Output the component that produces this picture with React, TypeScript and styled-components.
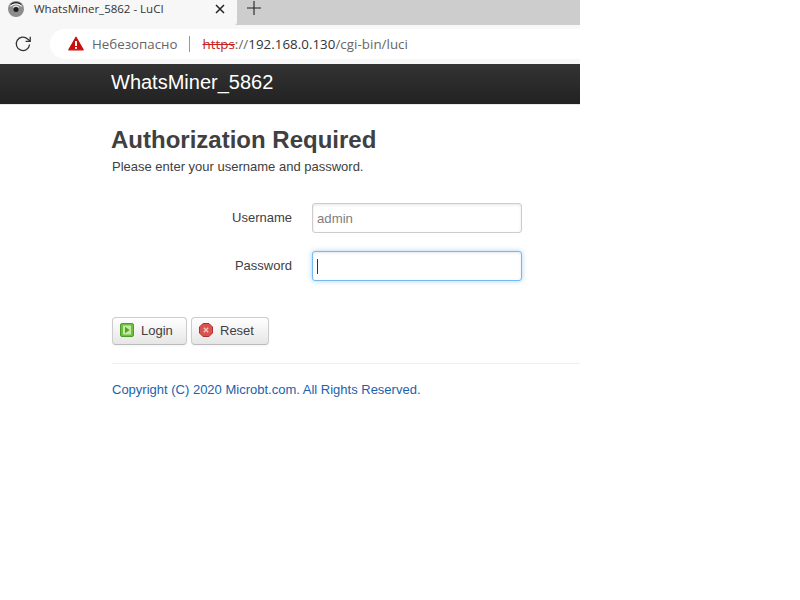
import * as React from "react";
import styled, { createGlobalStyle } from "styled-components";

const GlobalStyle = createGlobalStyle`
  html, body {
    margin: 0;
    padding: 0;
    background: white;
    font-family: "Liberation Sans", Arial, sans-serif;
  }
`;

const Page = styled.div`
  width: 580px;
  height: 600px;
  overflow: hidden;
`;

const TabStrip = styled.div`
  display: flex;
  height: 25px;
  background: #cdcdcd;
`;

const Tab = styled.div`
  width: 237px;
  display: flex;
  align-items: center;
  box-sizing: border-box;
  padding: 0 12px 8px 8px;
  background: #f7f7f7;
  border-bottom-right-radius: 3px;
`;

const TabTitle = styled.span`
  flex: 1;
  margin-left: 10px;
  font-family: "Open Sans", sans-serif;
  font-size: 11.5px;
  color: #333;
  white-space: nowrap;
`;

const NewTab = styled.div`
  display: flex;
  align-items: center;
  margin: 0 0 9px 10px;
`;

const Toolbar = styled.div`
  display: flex;
  align-items: center;
  box-sizing: border-box;
  height: 39px;
  padding: 4px 0 5px 14px;
  background: #f7f7f7;
`;

const Omnibox = styled.div`
  flex: 1;
  height: 30px;
  box-sizing: border-box;
  margin-left: 18px;
  display: flex;
  align-items: center;
  padding: 0 0 1px 18px;
  background: white;
  border-radius: 15px 0 0 15px;
  font-family: "Open Sans", sans-serif;
  font-size: 13.3px;
  white-space: nowrap;
`;

const Warning = styled.span`
  margin-left: 8px;
  color: #666;
`;

const Divider = styled.span`
  width: 1px;
  height: 16px;
  margin: 0 13px 0 11px;
  background: #999;
`;

const Url = styled.span`
  letter-spacing: 0.05px;
`;

const Scheme = styled.span`
  color: #c5221f;
  text-decoration: line-through;
`;

const Host = styled.span`
  color: #333;
`;

const Path = styled.span`
  color: #666;
`;

const Header = styled.div`
  height: 41px;
  box-sizing: border-box;
  padding: 0 0 4px 111px;
  display: flex;
  align-items: center;
  background: linear-gradient(#333333, #222222);
  border-bottom: 1px solid #e8e8e8;
  color: white;
  font-size: 20px;
`;

const Content = styled.div`
  padding: 22px 0 0 112px;
  color: #404040;
`;

const Title = styled.h2`
  margin: 0 0 0 -1px;
  font-size: 24px;
  line-height: 26px;
  font-weight: bold;
  color: #404040;
`;

const Intro = styled.p`
  margin: 5px 0 0;
  font-size: 13px;
  line-height: 18px;
`;

const Form = styled.div`
  display: flex;
  flex-direction: column;
  gap: 18px;
  margin-top: 27px;
`;

const Row = styled.div`
  display: flex;
  align-items: center;
`;

const Label = styled.label`
  width: 180px;
  padding-bottom: 2px;
  text-align: right;
  font-size: 13px;
  color: #404040;
`;

const Field = styled.div<{ $focused?: boolean }>`
  width: 210px;
  height: 30px;
  margin-left: 20px;
  box-sizing: border-box;
  display: flex;
  align-items: center;
  padding-left: 4px;
  background: white;
  border: 1px solid ${(p) => (p.$focused ? "#74b9ef" : "#ccc")};
  border-radius: 3px;
  font-size: 13.2px;
  color: #808080;
  box-shadow: ${(p) =>
    p.$focused
      ? "inset 0 1px 3px rgba(0,0,0,0.1), 0 0 5px rgba(82,168,236,0.5)"
      : "inset 0 1px 3px rgba(0,0,0,0.1)"};
`;

const Caret = styled.span`
  width: 1px;
  height: 15px;
  background: #333;
`;

const Actions = styled.div`
  display: flex;
  gap: 4px;
  margin-top: 36px;
`;

const Button = styled.div<{ $width: number }>`
  width: ${(p) => p.$width}px;
  height: 28px;
  box-sizing: border-box;
  display: flex;
  align-items: center;
  padding: 0 0 2px 7px;
  gap: 7px;
  background: linear-gradient(#ffffff, #e6e6e6);
  border: 1px solid #ccc;
  border-bottom-color: #bbb;
  border-radius: 4px;
  box-shadow: 0 1px 2px rgba(0, 0, 0, 0.05);
  font-size: 13px;
  color: #404040;
`;

const Rule = styled.hr`
  height: 1px;
  margin: 18px 0 0;
  border: 0;
  background: #eee;
`;

const Footer = styled.a`
  display: block;
  margin-top: 18px;
  font-size: 13px;
  line-height: 16px;
  color: #1a62ad;
`;

const Favicon = () => (
  <svg width="16" height="16" viewBox="0 0 16 16">
    <circle cx="8" cy="8" r="8" fill="#8c8c8c" />
    <path d="M3 3.5a7.5 7.5 0 0 1 10 0" fill="none" stroke="#222" strokeWidth="1.2" />
    <path d="M2.4 5.3a8 8 0 0 1 11.2 0" fill="none" stroke="#fff" strokeWidth="1.1" />
    <path d="M5 6.3a4.5 4.5 0 0 1 6 0" fill="none" stroke="#fff" strokeWidth="1" />
    <circle cx="8" cy="8.6" r="2.5" fill="#1c1c1c" />
  </svg>
);

const CloseIcon = () => (
  <svg width="10" height="10" viewBox="0 0 10 10">
    <path d="M1 1l8 8M9 1l-8 8" stroke="#222" strokeWidth="1.5" />
  </svg>
);

const PlusIcon = () => (
  <svg width="14" height="14" viewBox="0 0 14 14">
    <path d="M7 0v14M0 7h14" stroke="#222" strokeWidth="1.1" />
  </svg>
);

const ReloadIcon = () => (
  <svg width="18" height="18" viewBox="0 0 18 18" fill="none">
    <path d="M15.6 9.5A6.7 6.7 0 1 1 13.6 4L16 6" stroke="#333" strokeWidth="1.3" />
    <path d="M16.2 1.8v4.6h-4.6" stroke="#333" strokeWidth="1.3" />
  </svg>
);

const WarningIcon = () => (
  <svg width="16" height="15" viewBox="0 0 16 15">
    <path d="M8 1.2L15.2 13.8H0.8z" fill="#c5100d" stroke="#c5100d" strokeWidth="1.2" strokeLinejoin="round" />
    <rect x="7" y="5" width="2" height="5" fill="#fff" />
    <rect x="7" y="11" width="2" height="1.8" fill="#fff" />
  </svg>
);

const LoginIcon = () => (
  <svg width="14" height="14" viewBox="0 0 14 14">
    <rect x="0.5" y="0.5" width="13" height="13" rx="1.5" fill="#6fbf3f" stroke="#4f9a2a" />
    <rect x="3" y="2.5" width="8" height="9" fill="#c6ea9f" />
    <path d="M5 3.8L9.6 7L5 10.2z" fill="#4aa52a" />
  </svg>
);

const ResetIcon = () => (
  <svg width="14" height="14" viewBox="0 0 14 14">
    <path d="M4 0.5h6L13.5 4v6L10 13.5H4L0.5 10V4z" fill="#d9534f" stroke="#b03030" />
    <path d="M4.8 4.8l4.4 4.4M9.2 4.8l-4.4 4.4" stroke="#f5c8c8" strokeWidth="1.3" />
  </svg>
);

const App = () => {
  return (
    <Page>
      <GlobalStyle />
      <TabStrip>
        <Tab>
          <Favicon />
          <TabTitle>WhatsMiner_5862 - LuCI</TabTitle>
          <CloseIcon />
        </Tab>
        <NewTab>
          <PlusIcon />
        </NewTab>
      </TabStrip>
      <Toolbar>
        <ReloadIcon />
        <Omnibox>
          <WarningIcon />
          <Warning>Небезопасно</Warning>
          <Divider />
          <Url>
            <Scheme>https</Scheme>
            <Path>://</Path>
            <Host>192.168.0.130</Host>
            <Path>/cgi-bin/luci</Path>
          </Url>
        </Omnibox>
      </Toolbar>
      <Header>WhatsMiner_5862</Header>
      <Content>
        <Title>Authorization Required</Title>
        <Intro>Please enter your username and password.</Intro>
        <Form>
          <Row>
            <Label>Username</Label>
            <Field>admin</Field>
          </Row>
          <Row>
            <Label>Password</Label>
            <Field $focused>
              <Caret />
            </Field>
          </Row>
        </Form>
        <Actions>
          <Button $width={75}>
            <LoginIcon />
            Login
          </Button>
          <Button $width={78}>
            <ResetIcon />
            Reset
          </Button>
        </Actions>
        <Rule />
        <Footer>Copyright (C) 2020 Microbt.com. All Rights Reserved.</Footer>
      </Content>
    </Page>
  );
};

export default App;
